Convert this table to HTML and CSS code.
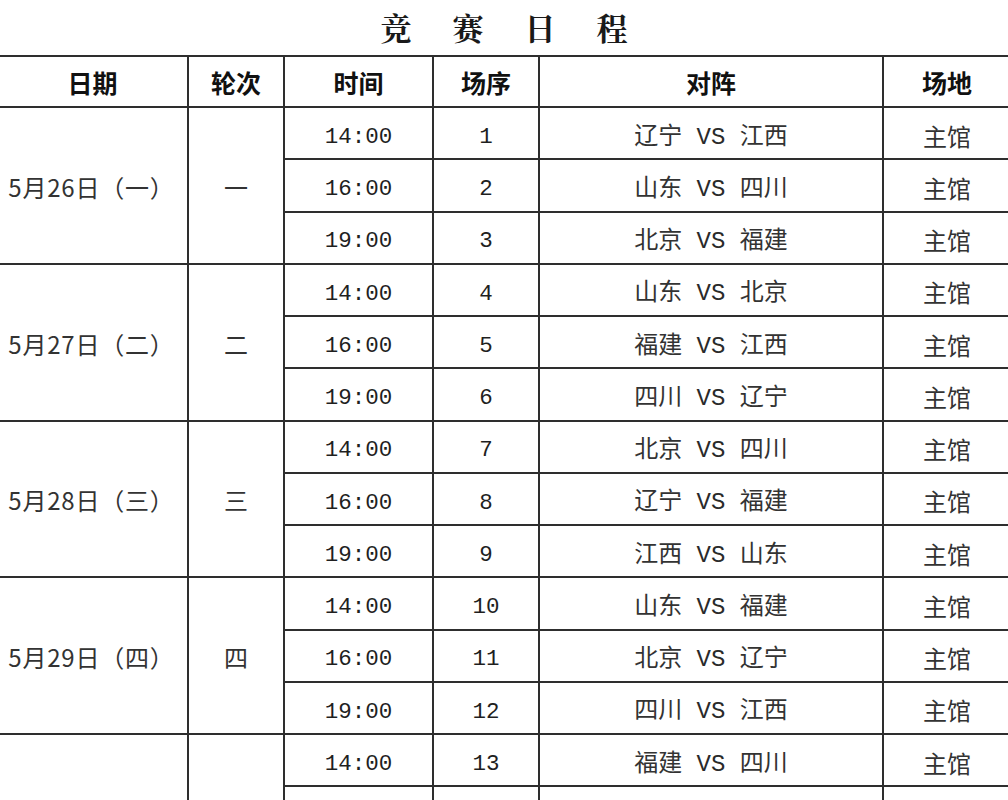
FILE: index.html
```html
<!DOCTYPE html>
<html lang="zh-CN">
<head>
<meta charset="utf-8">
<title>竞赛日程</title>
<link rel="stylesheet" href="styles.css">
</head>
<body>
<h1 class="title"><span>竞</span><span>赛</span><span>日</span><span>程</span></h1>
<table class="sched">
  <colgroup>
    <col class="c-date"><col class="c-round"><col class="c-time"><col class="c-no"><col class="c-match"><col class="c-venue">
  </colgroup>
  <thead>
    <tr><th>日期</th><th>轮次</th><th>时间</th><th>场序</th><th>对阵</th><th>场地</th></tr>
  </thead>
  <tbody>
    <tr><td class="date" rowspan="3">5月26日（一）</td><td class="round" rowspan="3">一</td><td class="mono">14:00</td><td class="mono">1</td><td class="match">辽宁<span class="vs"> VS </span>江西</td><td>主馆</td></tr>
    <tr><td class="mono">16:00</td><td class="mono">2</td><td class="match">山东<span class="vs"> VS </span>四川</td><td>主馆</td></tr>
    <tr><td class="mono">19:00</td><td class="mono">3</td><td class="match">北京<span class="vs"> VS </span>福建</td><td>主馆</td></tr>

    <tr><td class="date" rowspan="3">5月27日（二）</td><td class="round" rowspan="3">二</td><td class="mono">14:00</td><td class="mono">4</td><td class="match">山东<span class="vs"> VS </span>北京</td><td>主馆</td></tr>
    <tr><td class="mono">16:00</td><td class="mono">5</td><td class="match">福建<span class="vs"> VS </span>江西</td><td>主馆</td></tr>
    <tr><td class="mono">19:00</td><td class="mono">6</td><td class="match">四川<span class="vs"> VS </span>辽宁</td><td>主馆</td></tr>

    <tr><td class="date" rowspan="3">5月28日（三）</td><td class="round" rowspan="3">三</td><td class="mono">14:00</td><td class="mono">7</td><td class="match">北京<span class="vs"> VS </span>四川</td><td>主馆</td></tr>
    <tr><td class="mono">16:00</td><td class="mono">8</td><td class="match">辽宁<span class="vs"> VS </span>福建</td><td>主馆</td></tr>
    <tr><td class="mono">19:00</td><td class="mono">9</td><td class="match">江西<span class="vs"> VS </span>山东</td><td>主馆</td></tr>

    <tr><td class="date" rowspan="3">5月29日（四）</td><td class="round" rowspan="3">四</td><td class="mono">14:00</td><td class="mono">10</td><td class="match">山东<span class="vs"> VS </span>福建</td><td>主馆</td></tr>
    <tr><td class="mono">16:00</td><td class="mono">11</td><td class="match">北京<span class="vs"> VS </span>辽宁</td><td>主馆</td></tr>
    <tr><td class="mono">19:00</td><td class="mono">12</td><td class="match">四川<span class="vs"> VS </span>江西</td><td>主馆</td></tr>

    <tr><td class="date" rowspan="2"></td><td class="round" rowspan="2"></td><td class="mono">14:00</td><td class="mono">13</td><td class="match">福建<span class="vs"> VS </span>四川</td><td>主馆</td></tr>
    <tr><td class="mono"></td><td class="mono"></td><td class="match"></td><td></td></tr>
  </tbody>
</table>
</body>
</html>
```

FILE: styles.css
```css
html, body {
  margin: 0;
  padding: 0;
  background: #ffffff;
  overflow: hidden;
}

body {
  font-family: "Noto Sans CJK SC", "Noto Sans", sans-serif;
  color: #2a2a2a;
}

.title {
  margin: 0;
  height: 55px;
  display: flex;
  justify-content: center;
  align-items: center;
  gap: 41px;
  font-family: "Noto Serif CJK SC", "Noto Sans CJK SC", serif;
  font-size: 31px;
  font-weight: 700;
  line-height: 1;
  color: #1a1a1a;
  padding-bottom: 2px;
  box-sizing: border-box;
}

.sched {
  border-collapse: collapse;
  table-layout: fixed;
  width: 1014px;
  margin-left: -4px;
}

.c-date { width: 191px; }
.c-round { width: 96px; }
.c-time { width: 149px; }
.c-no { width: 106px; }
.c-match { width: 344px; }
.c-venue { width: 128px; }

.sched th,
.sched td {
  border: 2px solid #2e2e2e;
  padding: 0;
  text-align: center;
  vertical-align: middle;
  white-space: nowrap;
}

.sched thead tr {
  height: 51px;
}

.sched th {
  font-size: 25px;
  font-weight: 700;
  color: #111111;
  line-height: 1;
  padding-top: 2px;
}

.sched tbody tr {
  height: 52.25px;
}

.sched td {
  font-size: 24px;
  font-weight: 400;
  line-height: 1;
  color: #333333;
  padding-top: 5px;
}

.sched td.date {
  font-size: 24px;
  letter-spacing: 0.8px;
  padding-right: 2px;
  padding-top: 3px;
}

.sched td.round {
  font-size: 24px;
  padding-top: 3px;
}

.sched td.mono {
  font-family: "Liberation Mono", "DejaVu Sans Mono", monospace;
  font-size: 22.5px;
  color: #1f1f1f;
  padding-top: 8px;
}

.vs {
  font-family: "Liberation Mono", "DejaVu Sans Mono", monospace;
  font-size: 24px;
  color: #2a2a2a;
}
```
